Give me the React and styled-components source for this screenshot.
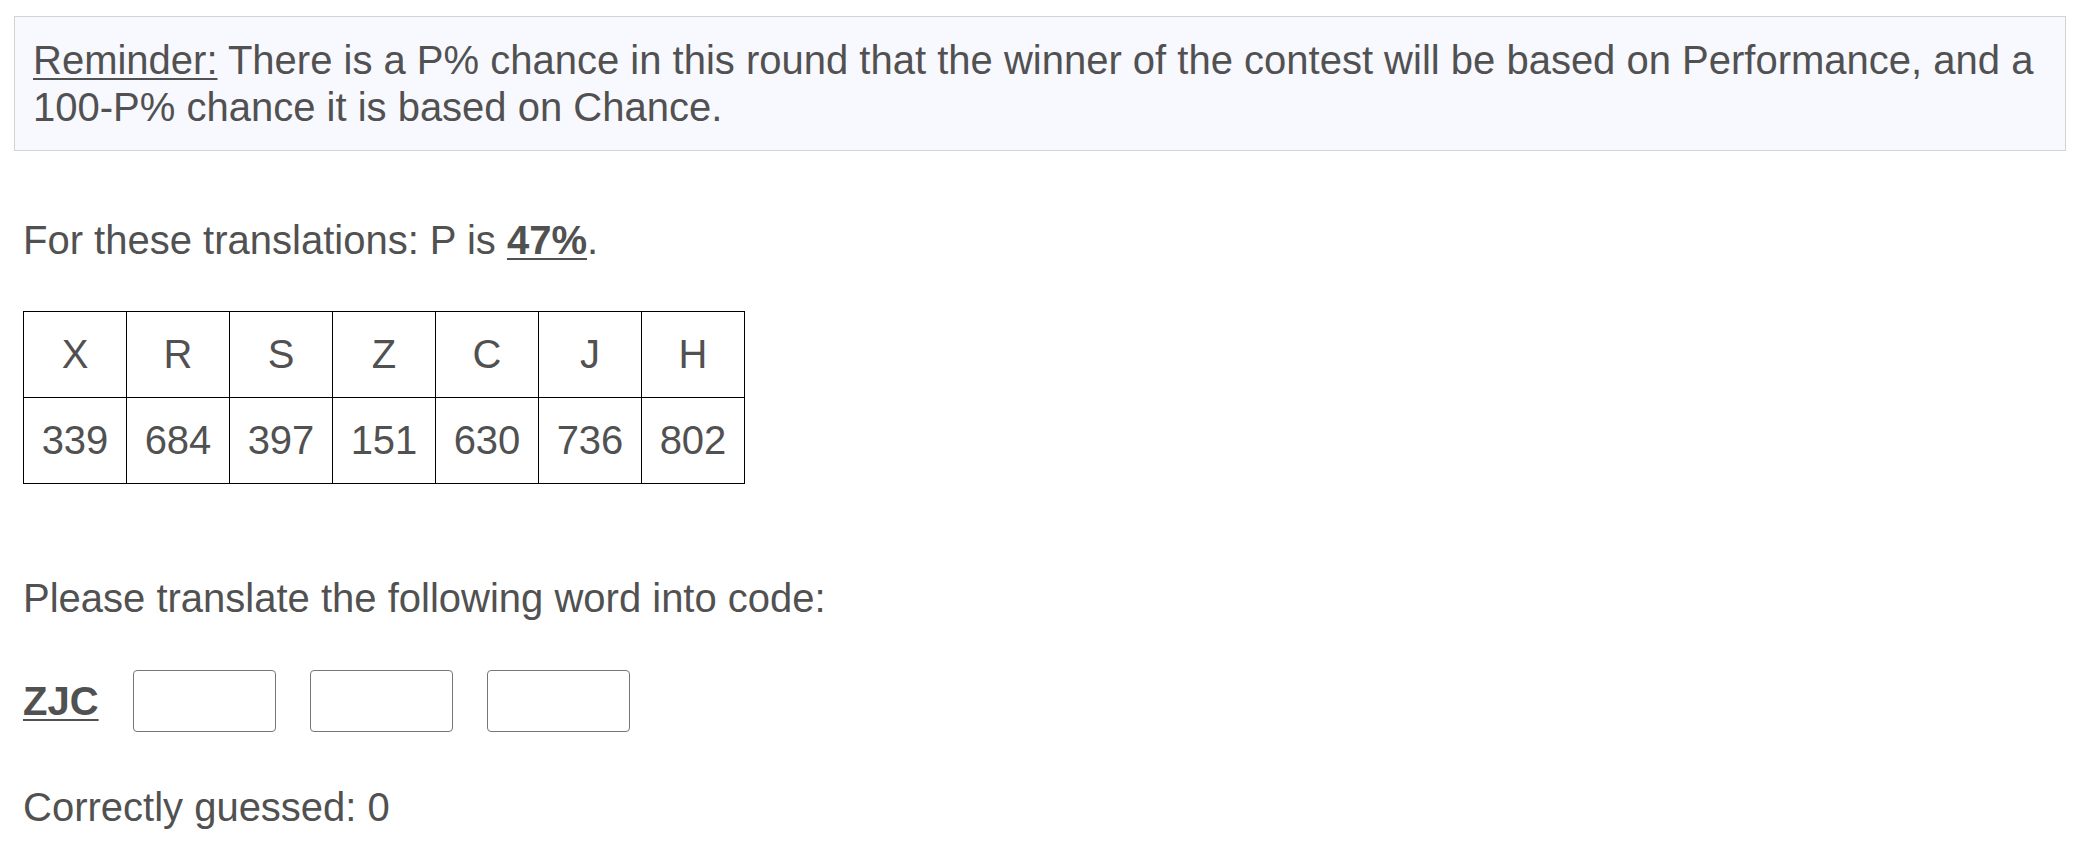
import React, { useState } from 'react';
import styled, { createGlobalStyle } from 'styled-components';

const GlobalStyle = createGlobalStyle`
  html, body {
    margin: 0;
    padding: 0;
    background: #fff;
  }
  body {
    font-family: "Liberation Sans", Arial, Helvetica, sans-serif;
    font-size: 40px;
    line-height: 47px;
    color: #515151;
  }
`;

const Page = styled.div`
  padding: 16px 14px 0;
`;

const Reminder = styled.div`
  background: #f8f8ff;
  border: 1px solid #d3d3d3;
  padding: 20px 18px 19px;
`;

const Underline = styled.span`
  text-decoration: underline;
  text-underline-offset: 4px;
  text-decoration-thickness: 2px;
`;

const Strong = styled(Underline)`
  font-weight: 700;
`;

const Content = styled.div`
  padding-left: 9px;
`;

const Text = styled.p`
  margin: ${p => p.$top}px 0 0;
`;

const CodeTable = styled.table`
  margin-top: 47px;
  border-collapse: collapse;
  font-size: 40px;
  line-height: 47px;
  color: inherit;
`;

const Cell = styled.td`
  width: 102px;
  padding: 19px 0;
  border: 1px solid #000;
  text-align: center;
  font-weight: 400;
`;

const HeadCell = styled(Cell).attrs({ as: 'th' })``;

const AnswerRow = styled.div`
  margin-top: 48px;
  display: flex;
  align-items: center;
  gap: 34px;
`;

const Word = styled(Strong)``;

const CodeInput = styled.input`
  box-sizing: border-box;
  width: 143px;
  height: 62px;
  border: 1px solid #767676;
  border-radius: 4px;
  background: #fff;
  font-family: inherit;
  font-size: 32px;
  padding: 0 10px;
  outline: none;
`;

const letters = ['X', 'R', 'S', 'Z', 'C', 'J', 'H'];
const codes = [339, 684, 397, 151, 630, 736, 802];

export default function App() {
  const [answers, setAnswers] = useState(['', '', '']);
  const [correct] = useState(0);

  const update = (i, v) => {
    setAnswers(prev => prev.map((a, j) => (j === i ? v : a)));
  };

  return (
    <>
      <GlobalStyle />
      <Page>
        <Reminder>
          <Underline>Reminder:</Underline> There is a P% chance in this round that the winner of the contest will be based on Performance, and a 100-P% chance it is based on Chance.
        </Reminder>

        <Content>
          <Text $top={66}>
            For these translations: P is <Strong>47%</Strong>.
          </Text>

          <CodeTable>
            <tbody>
              <tr>
                {letters.map(l => <HeadCell key={l}>{l}</HeadCell>)}
              </tr>
              <tr>
                {codes.map(c => <Cell key={c}>{c}</Cell>)}
              </tr>
            </tbody>
          </CodeTable>

          <Text $top={91}>Please translate the following word into code:</Text>

          <AnswerRow>
            <Word>ZJC</Word>
            {answers.map((a, i) => (
              <CodeInput key={i} value={a} onChange={e => update(i, e.target.value)} />
            ))}
          </AnswerRow>

          <Text $top={52}>Correctly guessed: {correct}</Text>
        </Content>
      </Page>
    </>
  );
}
